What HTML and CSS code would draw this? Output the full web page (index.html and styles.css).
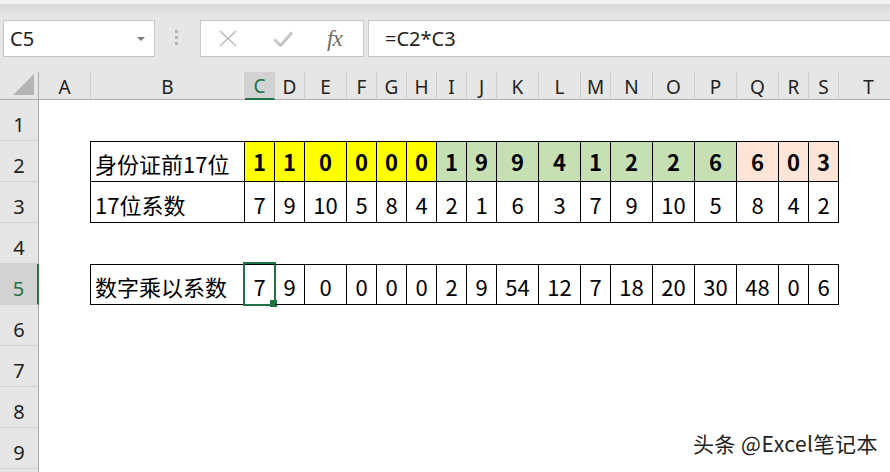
FILE: index.html
```html
<!DOCTYPE html>
<html lang="zh-CN">
<head>
<meta charset="UTF-8">
<meta name="viewport" content="width=device-width, initial-scale=1">
<title>身份证前17位 | 系数计算</title>
<link rel="stylesheet" href="styles.css">
</head>
<body>
<div class="app">
  <div class="toolbar">
    <div class="namebox">C5<span class="caret"></span></div>
    <div class="grip"><i></i><i></i><i></i></div>
    <div class="fxbox">
      <svg class="ico-x" width="18" height="17" viewBox="0 0 18 17"><path d="M1 1L17 16M17 1L1 16" stroke="#bdbdbd" stroke-width="1.6" fill="none"/></svg>
      <svg class="ico-ok" width="20" height="16" viewBox="0 0 20 16"><path d="M1.5 8.5L7.5 14.5L19 1.5" stroke="#c6c6c6" stroke-width="3" fill="none"/></svg>
      <span class="fx">fx</span>
    </div>
    <div class="formula">=C2*C3</div>
  </div>

  <div class="sheet">
    <div class="row head">
      <div class="corner"><svg width="22" height="22" viewBox="0 0 22 22"><path d="M0 21H21V0Z" fill="#b4b4b4"/></svg></div>
      <div class="ch">A</div><div class="ch">B</div><div class="ch on">C</div><div class="ch">D</div>
      <div class="ch">E</div><div class="ch">F</div><div class="ch">G</div><div class="ch">H</div>
      <div class="ch">I</div><div class="ch">J</div><div class="ch">K</div><div class="ch">L</div>
      <div class="ch">M</div><div class="ch">N</div><div class="ch">O</div><div class="ch">P</div>
      <div class="ch">Q</div><div class="ch">R</div><div class="ch">S</div><div class="ch">T</div>
    </div>

    <div class="row"><div class="rh">1</div></div>

    <div class="row top">
      <div class="rh">2</div><div class="edge"></div>
      <div class="cell label">身份证前17位</div>
      <div class="cell bold yellow">1</div><div class="cell bold yellow">1</div><div class="cell bold yellow">0</div>
      <div class="cell bold yellow">0</div><div class="cell bold yellow">0</div><div class="cell bold yellow">0</div>
      <div class="cell bold green">1</div><div class="cell bold green">9</div><div class="cell bold green">9</div>
      <div class="cell bold green">4</div><div class="cell bold green">1</div><div class="cell bold green">2</div>
      <div class="cell bold green">2</div><div class="cell bold green">6</div>
      <div class="cell bold peach">6</div><div class="cell bold peach">0</div><div class="cell bold peach">3</div>
    </div>

    <div class="row">
      <div class="rh">3</div><div class="edge"></div>
      <div class="cell label">17位系数</div>
      <div class="cell">7</div><div class="cell">9</div><div class="cell">10</div><div class="cell">5</div>
      <div class="cell">8</div><div class="cell">4</div><div class="cell">2</div><div class="cell">1</div>
      <div class="cell">6</div><div class="cell">3</div><div class="cell">7</div><div class="cell">9</div>
      <div class="cell">10</div><div class="cell">5</div><div class="cell">8</div><div class="cell">4</div>
      <div class="cell">2</div>
    </div>

    <div class="row"><div class="rh">4</div></div>

    <div class="row top">
      <div class="rh on">5</div><div class="edge"></div>
      <div class="cell label">数字乘以系数</div>
      <div class="cell active">7<span class="sel"><span class="handle"></span></span></div>
      <div class="cell">9</div><div class="cell">0</div><div class="cell">0</div><div class="cell">0</div>
      <div class="cell">0</div><div class="cell">2</div><div class="cell">9</div><div class="cell">54</div>
      <div class="cell">12</div><div class="cell">7</div><div class="cell">18</div><div class="cell">20</div>
      <div class="cell">30</div><div class="cell">48</div><div class="cell">0</div><div class="cell">6</div>
    </div>

    <div class="row"><div class="rh">6</div></div>
    <div class="row"><div class="rh">7</div></div>
    <div class="row"><div class="rh">8</div></div>
    <div class="row"><div class="rh">9</div></div>
    <div class="row"><div class="rh"></div></div>
  </div>

  <div class="watermark">头条 @Excel笔记本</div>
</div>
</body>
</html>
```

FILE: styles.css
```css
* { box-sizing: border-box; }
body { margin: 0; background: #fff; font-family: "Noto Sans", sans-serif; overflow: hidden; }
.app { position: relative; width: 890px; height: 472px; overflow: hidden; }

/* formula bar */
.toolbar { height: 72px; display: flex; align-items: flex-start; padding: 20px 0 0 3px; background: linear-gradient(#f3f3f3 0, #f3f3f3 4px, #d9d9d9 4px, #e6e6e6 15px); }
.namebox { position: relative; width: 152px; height: 37px; background: #fff; border: 1px solid #c6c6c6; font-size: 20px; line-height: 35px; padding-left: 6px; color: #222; }
.caret { position: absolute; right: 9px; top: 16px; border-left: 4px solid transparent; border-right: 4px solid transparent; border-top: 4px solid #7a7a7a; }
.grip { display: flex; flex-direction: column; gap: 3px; margin: 10px 22px 0 20px; }
.grip i { display: block; width: 3px; height: 3px; background: #b4b4b4; }
.fxbox { width: 164px; height: 37px; background: #fff; border: 1px solid #c6c6c6; display: flex; align-items: center; padding-left: 18px; }
.ico-ok { margin-left: 36px; }
.fx { margin-left: 34px; font: italic 23px "Liberation Serif", serif; color: #6b6b6b; letter-spacing: -1px; }
.formula { flex: 1; height: 37px; margin-left: 4px; margin-right: -2px; background: #fff; border: 1px solid #c6c6c6; font-size: 20px; line-height: 35px; padding-left: 16px; color: #222; }

/* grid */
.sheet { --cols: 39px 52px 154px 30px 30px 42px 30px 30px 30px 30px 30px 42px 42px 30px 42px 42px 42px 42px 30px 30px 60px; }
.row { display: grid; grid-template-columns: var(--cols); height: 41px; }
.row.head { height: 28px; background: #e6e6e6; }
.corner { border-right: 1px solid #ababab; border-bottom: 1px solid #ababab; display: flex; align-items: flex-end; justify-content: flex-end; padding: 0 3px 3px 0; }
.ch { border-right: 1px solid #cfcfcf; border-bottom: 1px solid #ababab; display: flex; align-items: flex-end; justify-content: center; font-size: 19px; line-height: 24px; color: #222; }
.ch.on { background: #d2d2d2; border-bottom: 2px solid #217346; color: #217346; }
.rh { background: #e6e6e6; border-right: 1px solid #ababab; border-bottom: 1px solid #d0d0d0; display: flex; align-items: flex-end; justify-content: center; font-size: 20px; line-height: 24px; padding-bottom: 3px; color: #222; }
.rh.on { background: #d2d2d2; border-right: 2px solid #217346; color: #217346; }

/* table cells */
.edge { border-right: 1px solid #000; }
.cell { position: relative; border-right: 1px solid #000; border-bottom: 1px solid #000; display: flex; align-items: flex-end; justify-content: center; font: 22px/30px "Noto Sans CJK SC", sans-serif; padding-bottom: 3px; color: #000; }
.row.top .cell { border-top: 1px solid #000; }
.cell.label { justify-content: flex-start; padding-left: 4px; }
.cell.bold { font-weight: bold; padding-bottom: 5px; }
.yellow { background: #ffff00; }
.green { background: #c6e0b4; }
.peach { background: #fce4d6; }

/* active cell */
.sel { position: absolute; left: -2px; top: -3px; width: 33px; height: 44px; border: 2px solid #217346; }
.handle { position: absolute; left: 25px; top: 36px; width: 7px; height: 7px; background: #217346; }

.watermark { position: absolute; right: 12px; bottom: 14px; font: 21px "Noto Sans CJK SC", sans-serif; color: #222; letter-spacing: 0.5px; text-shadow: 0 0 3px #fff, 0 0 3px #fff; }
```
